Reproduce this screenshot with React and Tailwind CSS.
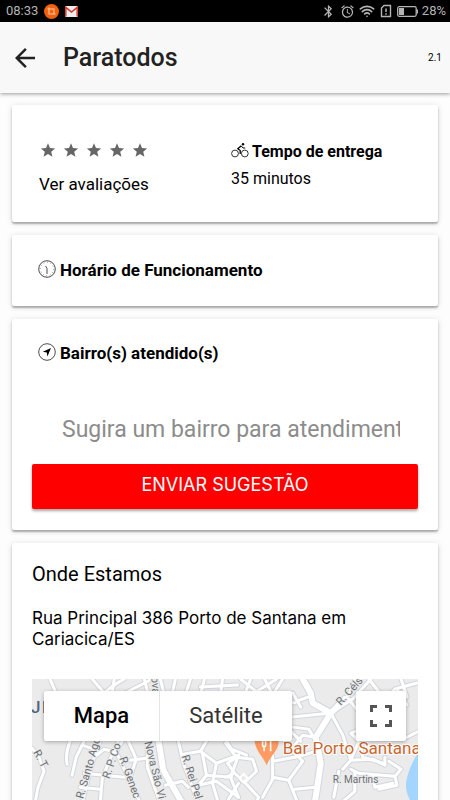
import { useState } from 'react';
import { IoMdStar } from 'react-icons/io';
import { MdArrowBack, MdBluetooth, MdAlarm } from 'react-icons/md';
import { Wifi } from 'lucide-react';

const minorRoads = [
    'M0 69 L7 78 L12 92 L6 108 L3 124',
    'M18 0 L24 14', 'M60 0 L72 14 L82 6 L92 0', 'M82 0 L80 14', 'M93 14 L120 0', 'M112 0 L116 16', 'M128 0 L132 16',
    'M140 14 L143 0', 'M158 0 L153 16', 'M172 0 L168 16', 'M168 8 L205 6', 'M190 0 L188 16',
    'M38 62 Q33 74 35 85', 'M52 62 L44 78 L40 96', 'M50 66 L62 70',
    'M68 62 L60 84 L50 124', 'M87 60 L76 84 L70 100 L68 124', 'M52 94 L92 98', 'M48 108 L68 110',
    'M62 78 L72 70 L84 73 L94 94 L108 124', 'M84 73 L90 62', 'M96 62 L104 80 L98 98', 'M98 81 L114 79',
    'M115 60 L115 88 L128 124', 'M146 62 L151 84 L166 124', 'M133 106 L150 102 L156 108',
    'M151 75 L168 72 L174 62', 'M168 72 L184 84 L206 76', 'M170 74 L174 96 L166 106', 'M166 106 L184 102 L206 118',
    'M184 84 L180 104 L186 124', 'M206 76 L198 98 L206 118', 'M174 96 L199 98', 'M194 62 L199 70 L214 76',
    'M208 0 L228 16', 'M218 0 L212 16', 'M232 0 L240 16 L262 24', 'M222 14 L244 0', 'M250 0 L240 16',
    'M264 22 L278 17', 'M260 14 L268 28', 'M260 38 L298 34', 'M260 48 L276 50 L282 60',
    'M193 64 L204 78 L220 80 L224 92 L212 103 L202 94 L193 98', 'M202 94 L195 84 L204 78',
    'M212 103 L226 118 L224 124', 'M196 120 L206 104', 'M240 76 L240 100 L230 118',
    'M240 98 L256 101 L264 121', 'M256 101 L270 82 L258 70', 'M240 82 L262 78 L284 72', 'M262 110 L282 108',
    'M262 66 L270 56 L282 58', 'M256 50 L268 62',
    'M298 34 L310 56 L318 81', 'M322 0 L316 16 L298 34', 'M298 34 L320 20 L338 0', 'M316 20 L328 36',
    'M336 0 L350 18', 'M350 22 L362 10 L384 4', 'M368 0 L374 18', 'M364 10 L374 26',
    'M310 90 L318 81 L326 62 L318 54 L328 50 L346 58', 'M326 62 L330 78 L350 84',
    'M318 81 L340 80 L352 86 L352 78', 'M306 92 L301 118', 'M318 90 L326 94 L362 97 L368 90 L356 82',
    'M340 97 L342 108 L360 104', 'M362 97 L364 106 L346 110', 'M370 60 L386 52', 'M322 92 L322 112 L308 124',
];

const mainRoads = [
    'M126 60 L131 91 L150 124',
    'M270 0 L278 14 L280 24 L298 34',
    'M298 34 L283 58 L288 84 L282 124',
    'M298 34 L312 20',
];

const streetNames = [
    { name: 'R. T', x: 1, y: 73, turn: 'rotate(62 1 73)' },
    { name: 'R. Santo Ago', x: 51, y: 120, turn: 'rotate(-74 51 120)' },
    { name: 'R. P. Co', x: 77, y: 100, turn: 'rotate(-71 77 100)' },
    { name: 'R. Genec', x: 87, y: 79, turn: 'rotate(70 87 79)' },
    { name: 'Nova São Vi', x: 112, y: 63, turn: 'rotate(76 112 63)' },
    { name: 'ova', x: 119, y: -2, turn: 'rotate(86 119 -2)' },
    { name: 'R. Rei Pel', x: 149, y: 77, turn: 'rotate(72 149 77)' },
    { name: 'R. Céls', x: 308, y: 27, turn: 'rotate(-48 308 27)' },
];

function StatusBar() {
    return (
        <div className="flex h-[22px] shrink-0 items-center justify-between bg-black px-1.5 text-[13px] text-[#b4b4b4]">
            <div className="flex items-center gap-1.5">
                <span>08:33</span>
                <svg className="size-[15px]" viewBox="0 0 15 15">
                    <circle cx="7.5" cy="7.5" r="7.5" fill="#f4600c" />
                    <path d="M3.5 5h6.500v5.500M5 3.500v6.500h6.500" fill="none" stroke="#ffc9a3" strokeWidth="1.100" />
                </svg>
                <svg className="h-[11px] w-[13px]" viewBox="0 0 13 11">
                    <rect width="13" height="11" rx="1" fill="#eeeeee" />
                    <path d="M.8 10.500V1.300l5.700 4.700L12.200 1.300v9.200" fill="none" stroke="#d9352b" strokeWidth="1.500" />
                </svg>
            </div>
            <div className="-mr-0.5 flex items-center gap-1">
                <MdBluetooth className="size-[15px]" />
                <MdAlarm className="size-[15px]" />
                <Wifi className="size-4" strokeWidth={2.5} />
                <svg className="h-[14px] w-[14px]" viewBox="0 0 14 14" fill="none" stroke="currentColor" strokeWidth="1.400">
                    <path d="M5 1.500h6.500v11h-9V4z" />
                    <path d="M7 4.500v3.500M7 9.200v1.500" strokeWidth="1.500" />
                </svg>
                <svg className="h-[11px] w-[21px]" viewBox="0 0 21 11">
                    <rect x=".7" y=".7" width="18.500" height="9.600" rx="1.500" fill="none" stroke="currentColor" strokeWidth="1.300" />
                    <rect x="2" y="2" width="5" height="7" fill="currentColor" />
                    <rect x="19.500" y="3.500" width="1.500" height="4" fill="currentColor" />
                </svg>
                <span>28%</span>
            </div>
        </div>
    );
}

function Card({ className, children }) {
    return (
        <section className={`rounded-xs bg-white shadow-[0_2px_2px_rgba(0,0,0,0.28),0_1px_6px_rgba(0,0,0,0.14)] ${className}`}>
            {children}
        </section>
    );
}

function BikeIcon() {
    return (
        <svg className="mb-1 h-[16px] w-[18px]" viewBox="0 0 18 16" fill="none" stroke="#000">
            <circle cx="4" cy="11.500" r="3.400" strokeWidth=".8" />
            <circle cx="13.800" cy="11.500" r="3.400" strokeWidth=".8" />
            <circle cx="12" cy="2.300" r="1.200" fill="#000" stroke="none" />
            <path d="M10.300 3.800L6.800 6.800l2.400 1.800v3.400" strokeWidth="1.300" />
            <path d="M10.300 4l1.700 2h2.200" strokeWidth="1" />
        </svg>
    );
}

function ClockIcon() {
    return (
        <svg className="mb-1 size-[18px]" viewBox="0 0 18 18" fill="none" stroke="#000">
            <circle cx="9" cy="9" r="8.300" strokeWidth=".7" />
            <circle cx="9" cy="9" r="6.800" strokeWidth=".9" strokeDasharray=".5 3.060" />
            <path d="M7.600 6L9 8.500v5.500" strokeWidth=".7" />
        </svg>
    );
}

function NavigateIcon() {
    return (
        <svg className="mb-1 size-[18px]" viewBox="0 0 18 18">
            <circle cx="9" cy="9" r="8.300" fill="none" stroke="#000" strokeWidth=".7" />
            <path d="M13 5L4.800 8.800l4 .6.600 4z" fill="#000" />
        </svg>
    );
}

function MapDrawing() {
    return (
        <svg className="h-[160px] w-full" viewBox="0 0 385 160" preserveAspectRatio="xMinYMin slice">
            <rect width="1200" height="160" fill="#ebebeb" />
            <path d="M386 72 C377 86 373 98 373 108 C374 120 384 128 386 160z" fill="#a3d5ff" />
            <g fill="none" strokeLinejoin="round" strokeLinecap="round">
                {minorRoads.map((d) => <path key={d} d={d} stroke="#d3d6db" strokeWidth="5" />)}
                {mainRoads.map((d) => <path key={d} d={d} stroke="#d3d6db" strokeWidth="8" />)}
                {minorRoads.map((d) => <path key={d} d={d} stroke="#fff" strokeWidth="3" />)}
                {mainRoads.map((d) => <path key={d} d={d} stroke="#fff" strokeWidth="6" />)}
            </g>
            <rect x="208" y="96" width="6" height="6" transform="rotate(45 211 99)" fill="#ebebeb" stroke="#fff" strokeWidth="2" />
            <g fontSize="11" fill="#6b7075" stroke="#ebebeb" strokeWidth="2" paintOrder="stroke">
                {streetNames.map((s) => (
                    <text key={s.name} x={s.x} y={s.y} transform={s.turn}>{s.name}</text>
                ))}
                <text x="300" y="104" fontSize="10">R. Martins</text>
            </g>
            <g fontSize="17" fontWeight="500" fill="#4d6880">
                <text x="-1" y="34">J</text>
                <text x="10" y="34" fill="#1c4a68">I</text>
            </g>
            <path d="M222 60c0-8 24-8 24 3 0 8-8 13-12 23-4-10-12-15-12-26z" fill="#ff9a62" />
            <path d="M230 58v8m3-8v8m-3 0c0 2 3 2 3 0M231.500 67v5M238 58v14" fill="none" stroke="#fff" strokeWidth="1.600" />
            <text x="250" y="75" fontSize="17" fill="#c8682f" stroke="#fff" strokeWidth="2" paintOrder="stroke">Bar Porto Santana</text>
        </svg>
    );
}

export default function App() {
    const [bairro, setBairro] = useState('');
    const [mapType, setMapType] = useState('mapa');

    return (
        <div className="flex h-screen flex-col overflow-hidden bg-[#fdfdfd] font-[Roboto,sans-serif] text-black">
            <StatusBar />
            <header className="z-10 flex h-[71px] shrink-0 items-center bg-[#f8f8f8] px-2.5 shadow-[0_1px_4px_rgba(0,0,0,0.4)]">
                <button type="button" aria-label="Voltar" className="text-[#222]">
                    <MdArrowBack className="size-[30px]" />
                </button>
                <h1 className="ml-[23px] flex-1 text-[25px] font-medium text-[#222]">Paratodos</h1>
                <span className="-mr-0.5 text-[10px]">2.1</span>
            </header>

            <main className="flex flex-col gap-[13px] p-3">
                <Card className="grid h-[117px] grid-cols-[192px_1fr] px-[27px] pt-[35px]">
                    <div>
                        <div className="flex h-5 items-center gap-[5px] text-[#666]">
                            {[1, 2, 3, 4, 5].map((n) => <IoMdStar key={n} className="size-[18px]" />)}
                        </div>
                        <a href="#avaliacoes" className="mt-3 block text-[17px] leading-6">Ver avaliações</a>
                    </div>
                    <div>
                        <h2 className="flex items-center gap-[3px] text-base font-bold"><BikeIcon />Tempo de entrega</h2>
                        <p className="text-base leading-[30px]">35 minutos</p>
                    </div>
                </Card>

                <Card className="flex h-[71px] items-center px-[26px]">
                    <h2 className="flex items-center gap-1 text-[17px] font-bold"><ClockIcon />Horário de Funcionamento</h2>
                </Card>

                <Card className="px-5 pt-[22px] pb-[21px]">
                    <h2 className="flex items-center gap-1 pl-1.5 text-[17px] font-bold"><NavigateIcon />Bairro(s) atendido(s)</h2>
                    <input
                        type="text"
                        aria-label="Sugira um bairro"
                        className="mt-[41px] ml-[30px] block h-[44px] w-[calc(100%-48px)] text-[23px] outline-none placeholder:text-[#8c8c8c]"
                        placeholder="Sugira um bairro para atendimento"
                        value={bairro}
                        onChange={(event) => setBairro(event.currentTarget.value)}
                    />
                    <button type="button" className="mt-3 block h-[45px] w-full rounded-xs bg-[#ff0000] pb-1 font-[Inter,sans-serif] text-[18px] text-white shadow-[0_2px_3px_rgba(0,0,0,0.35)]">
                        ENVIAR SUGESTÃO
                    </button>
                </Card>

                <Card className="px-5 pt-[19px]">
                    <h2 className="text-[20px] leading-6">Onde Estamos</h2>
                    <p className="mt-[22px] font-[Inter,sans-serif] text-[17px] leading-[21px]">Rua Principal 386 Porto de Santana em Cariacica/ES</p>
                    <div className="relative mt-[29px] overflow-hidden">
                        <MapDrawing />
                        <div className="absolute top-3 left-3 flex h-[50px] w-[248px] rounded-xs bg-white text-[22px] shadow-[0_1px_4px_rgba(0,0,0,0.3)]">
                            <button
                                type="button"
                                className={`w-[116px] border-r border-[#e6e6e6] ${mapType === 'mapa' ? 'font-medium text-black' : 'text-[#333]'}`}
                                onClick={() => setMapType('mapa')}
                            >
                                Mapa
                            </button>
                            <button
                                type="button"
                                className={`flex-1 ${mapType === 'satelite' ? 'font-medium text-black' : 'text-[#333]'}`}
                                onClick={() => setMapType('satelite')}
                            >
                                Satélite
                            </button>
                        </div>
                        <button type="button" aria-label="Tela cheia" className="absolute top-3 right-3 flex size-[50px] items-center justify-center rounded-xs bg-white shadow-[0_1px_4px_rgba(0,0,0,0.3)]">
                            <svg className="size-[24px]" viewBox="0 0 24 24" fill="none" stroke="#555" strokeWidth="3">
                                <path d="M2.500 8V2.500H8M16 2.500h5.500V8M21.500 16v5.500H16M8 21.500H2.500V16" />
                            </svg>
                        </button>
                    </div>
                </Card>
            </main>
        </div>
    );
}
